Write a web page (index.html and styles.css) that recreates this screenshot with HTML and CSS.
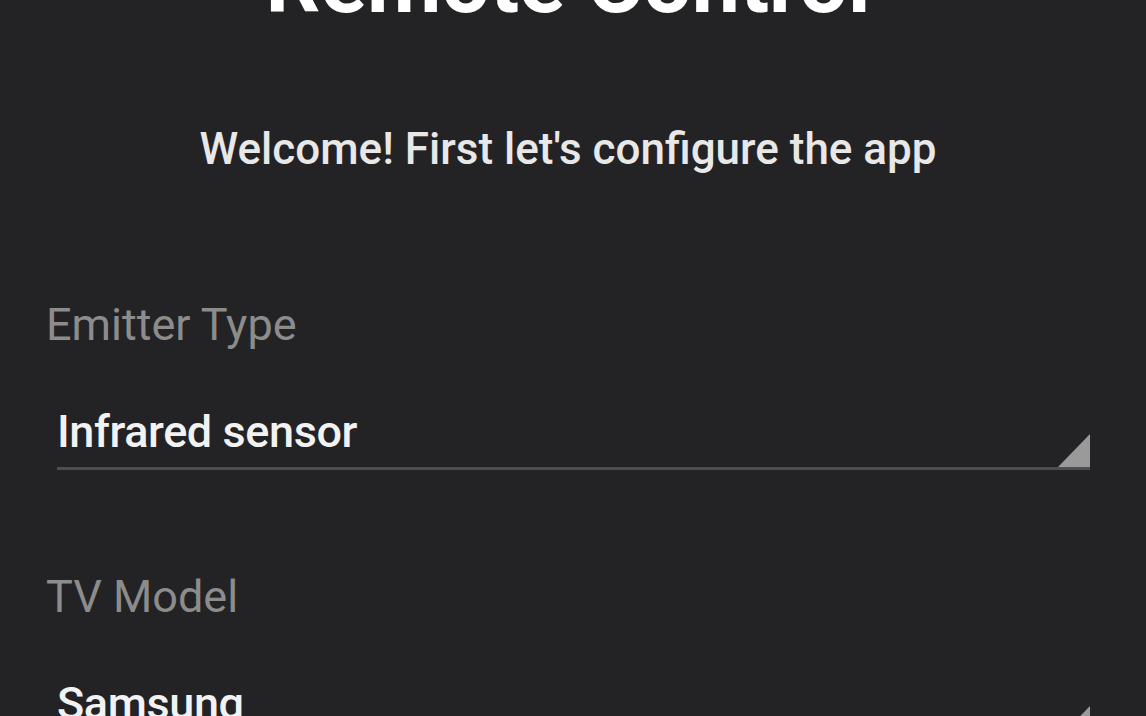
FILE: index.html
```html
<!DOCTYPE html>
<html lang="en">
<head>
  <meta charset="UTF-8">
  <meta name="viewport" content="width=device-width, initial-scale=1.0">
  <title>Remote Control</title>
  <link rel="stylesheet" href="styles.css">
</head>
<body>
  <div class="screen">
    <h1 class="title">Remote Control</h1>
    <p class="welcome">Welcome! First let's configure the app</p>

    <div class="field">
      <label class="field-label">Emitter Type</label>
      <div class="select">
        <span class="select-value">Infrared sensor</span>
        <span class="select-arrow"></span>
      </div>
    </div>

    <div class="field">
      <label class="field-label">TV Model</label>
      <div class="select">
        <span class="select-value">Samsung</span>
        <span class="select-arrow"></span>
      </div>
    </div>
  </div>
</body>
</html>
```

FILE: styles.css
```css
*, *:before, *:after{
  padding: 0;
  margin: 0;
  box-sizing: border-box;
}
html, body{
  height: 100%;
  overflow: hidden;
}
body{
  background-color: #232325;
  font-family: Roboto, "Noto Sans", Arial, sans-serif;
  color: #ececec;
}
.screen{
  padding: 0 56px 0 46px;
}
.title{
  font-size: 86px;
  font-weight: 700;
  line-height: 1;
  text-align: center;
  color: #ffffff;
  margin-top: -60px;
}
.welcome{
  font-size: 44px;
  font-weight: 500;
  line-height: 1;
  text-align: center;
  color: #e8e8e8;
  margin-top: 101px;
}
.field{
  margin-top: 131px;
}
.field + .field{
  margin-top: 104px;
}
.field-label{
  display: block;
  font-size: 45px;
  line-height: 1;
  color: #8c8c8c;
}
.select{
  position: relative;
  display: flex;
  align-items: flex-end;
  margin: 62px 0 0 11px;
  padding-bottom: 13px;
  border-bottom: 3px solid #4e4e50;
}
.select-value{
  display: block;
  font-size: 45px;
  font-weight: 500;
  letter-spacing: -0.4px;
  line-height: 1;
  color: #f2f2f2;
}
.select-arrow{
  position: absolute;
  right: 0;
  bottom: 0;
  width: 32px;
  height: 33px;
  background: #9a9a9a;
  clip-path: polygon(100% 0, 100% 100%, 0 100%);
}
```
